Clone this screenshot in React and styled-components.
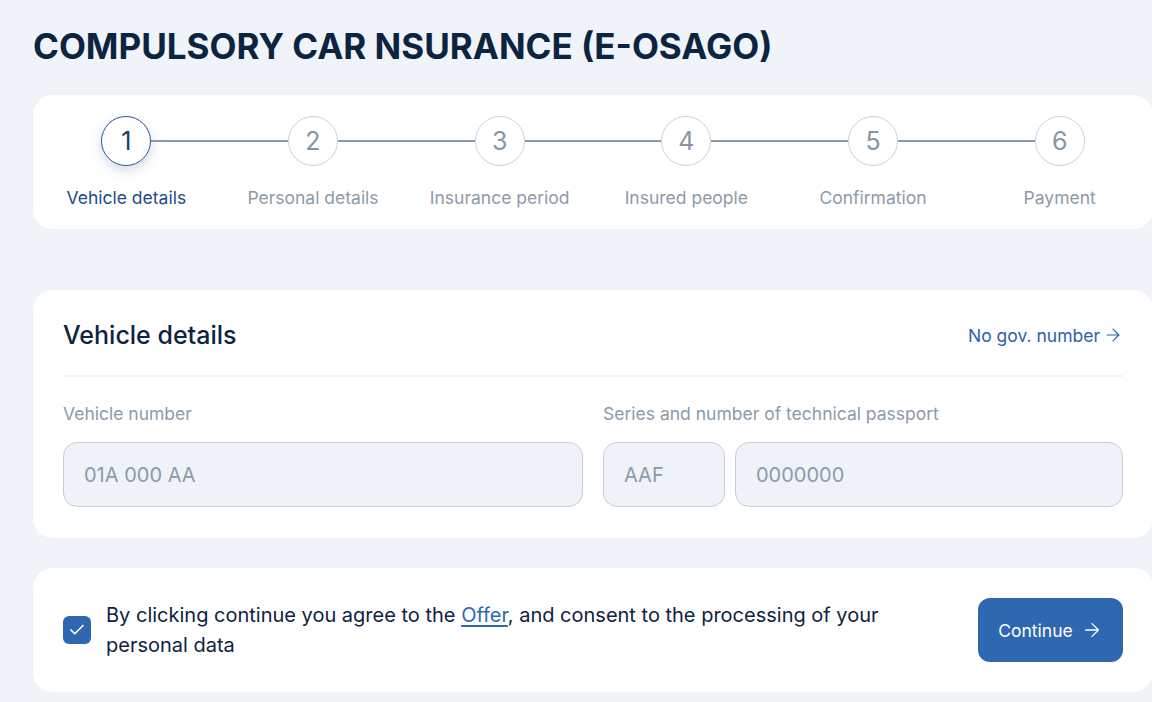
import React from 'react';
import styled, { createGlobalStyle } from 'styled-components';
import { ArrowRight, Check } from 'lucide-react';

const GlobalStyle = createGlobalStyle`
  * { box-sizing: border-box; }
  body {
    margin: 0;
    background: #f0f4f8;
    font-family: Inter, "Noto Sans", "Liberation Sans", sans-serif;
    color: #0d2341;
  }
`;

const Page = styled.div`
  width: 1120px;
  margin-left: 33px;
  padding-top: 24px;
`;

const Title = styled.h1`
  margin: 0 0 27px;
  font-size: 35px;
  line-height: 44px;
  font-weight: 700;
  color: #0c2442;
`;

const Card = styled.section`
  background: #fff;
  border-radius: 20px;
  margin-bottom: ${p => p.$gap || 30}px;
`;

const Steps = styled.div`
  display: grid;
  grid-template-columns: repeat(6, 1fr);
  padding: 21px 0 21px;
`;

const Step = styled.div`
  position: relative;
  display: flex;
  flex-direction: column;
  align-items: center;
  gap: 22px;

  &:not(:last-child)::after {
    content: '';
    position: absolute;
    top: 24px;
    left: calc(50% + 25px);
    width: calc(100% - 50px);
    height: 2px;
    background: #8c9aa9;
  }
`;

const Circle = styled.div`
  width: 50px;
  height: 50px;
  border-radius: 50%;
  display: flex;
  align-items: center;
  justify-content: center;
  background: #fff;
  font-size: 25px;
  color: ${p => (p.$active ? '#1d3b6a' : '#8796a6')};
  border: 1px solid ${p => (p.$active ? '#2c5694' : '#c8d1db')};
  box-shadow: ${p => (p.$active ? '0 4px 12px rgba(44, 86, 148, 0.22)' : 'none')};
`;

const StepLabel = styled.div`
  font-size: 17.5px;
  line-height: 20px;
  color: ${p => (p.$active ? '#1e4b86' : '#8c9aa9')};
  white-space: nowrap;
`;

const FormCard = styled(Card)`
  padding: 30px 30px 31px;
`;

const Header = styled.div`
  display: flex;
  align-items: center;
  justify-content: space-between;
  padding-bottom: 25px;
  border-bottom: 2px solid #f0f2f5;
`;

const CardTitle = styled.h2`
  margin: 0;
  font-size: 25px;
  line-height: 30px;
  font-weight: 500;
  color: #0c2442;
`;

const Link = styled.a`
  display: flex;
  align-items: center;
  gap: 3px;
  font-size: 17.5px;
  color: #2c62a8;
  text-decoration: none;
`;

const Fields = styled.div`
  display: grid;
  grid-template-columns: 520px 1fr;
  gap: 20px;
  padding-top: 27px;
`;

const Field = styled.div`
  display: flex;
  flex-direction: column;
  gap: 18px;
`;

const Label = styled.label`
  font-size: 17.5px;
  line-height: 20px;
  color: #8c9aa9;
`;

const InputRow = styled.div`
  display: flex;
  gap: 10px;
`;

const Input = styled.div`
  height: 65px;
  width: ${p => (p.$w ? `${p.$w}px` : 'auto')};
  flex: ${p => (p.$w ? 'none' : 1)};
  display: flex;
  align-items: center;
  padding: 0 20px;
  background: #eff3f7;
  border: 1px solid #c6cfd9;
  border-radius: 14px;
  font-size: 20px;
  color: #8c9aa9;
`;

const ConsentCard = styled(Card)`
  display: flex;
  align-items: center;
  justify-content: space-between;
  padding: 30px;
  gap: 40px;
`;

const Agree = styled.div`
  display: flex;
  align-items: center;
  gap: 15px;
  flex: 1;
`;

const Box = styled.div`
  width: 28px;
  height: 28px;
  flex: none;
  border-radius: 6px;
  background: #2f67b1;
  display: flex;
  align-items: center;
  justify-content: center;
  color: #fff;
`;

const AgreeText = styled.p`
  margin: 0;
  font-size: 20px;
  line-height: 30px;
  color: #0d2341;

  a {
    color: #2f67b1;
    text-decoration: underline;
    text-underline-offset: 3px;
  }
`;

const Button = styled.button`
  width: 145px;
  height: 64px;
  flex: none;
  border: none;
  border-radius: 12px;
  background: #2f67b1;
  color: #fff;
  font-family: inherit;
  font-size: 17.5px;
  display: flex;
  align-items: center;
  justify-content: center;
  gap: 8px;
`;

const steps = [
  'Vehicle details',
  'Personal details',
  'Insurance period',
  'Insured people',
  'Confirmation',
  'Payment',
];

export default function App() {
  return (
    <>
      <GlobalStyle />
      <Page>
        <Title>COMPULSORY CAR NSURANCE (E-OSAGO)</Title>

        <Card $gap={61}>
          <Steps>
            {steps.map((s, i) => (
              <Step key={s}>
                <Circle $active={i === 0}>{i + 1}</Circle>
                <StepLabel $active={i === 0}>{s}</StepLabel>
              </Step>
            ))}
          </Steps>
        </Card>

        <FormCard>
          <Header>
            <CardTitle>Vehicle details</CardTitle>
            <Link href="#">
              No gov. number <ArrowRight size={20} strokeWidth={1.4} />
            </Link>
          </Header>
          <Fields>
            <Field>
              <Label>Vehicle number</Label>
              <Input>01A 000 AA</Input>
            </Field>
            <Field>
              <Label>Series and number of technical passport</Label>
              <InputRow>
                <Input $w={122}>AAF</Input>
                <Input>0000000</Input>
              </InputRow>
            </Field>
          </Fields>
        </FormCard>

        <ConsentCard>
          <Agree>
            <Box>
              <Check size={18} strokeWidth={2.2} />
            </Box>
            <AgreeText>
              By clicking continue you agree to the <a href="#">Offer</a>, and consent to the processing of your personal data
            </AgreeText>
          </Agree>
          <Button>
            Continue <ArrowRight size={22} strokeWidth={1.4} />
          </Button>
        </ConsentCard>
      </Page>
    </>
  );
}
